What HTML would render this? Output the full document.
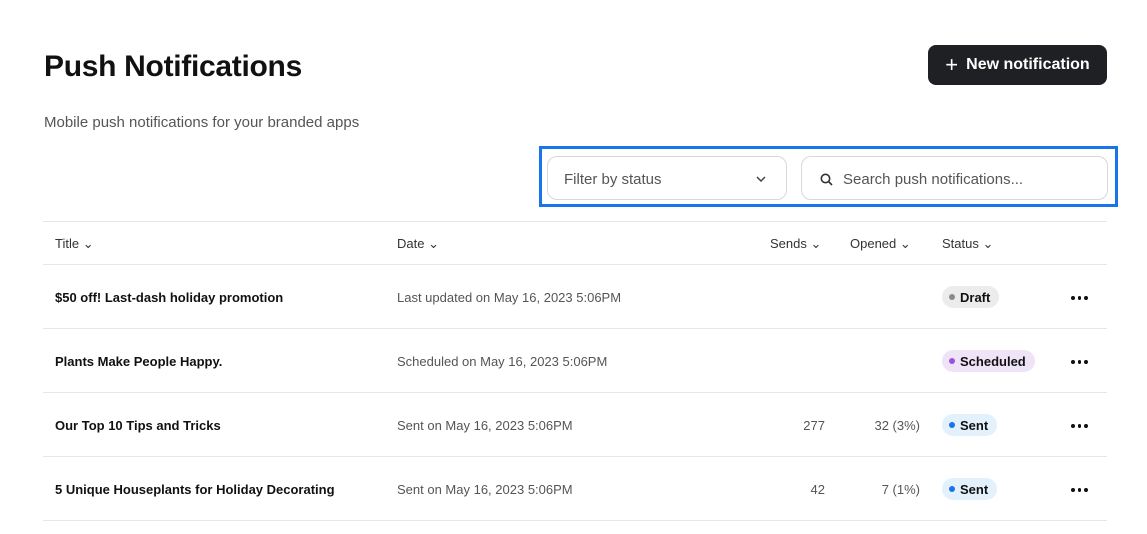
<!DOCTYPE html><html><head><style>
body{margin:0;width:1147px;height:534px;background:#fff;font-family:"Liberation Sans",sans-serif;position:relative;overflow:hidden;color:#111}
.a{position:absolute}
h1{position:absolute;left:44px;top:50px;margin:0;font-size:30px;font-weight:bold;letter-spacing:-0.3px}
.btn{left:928px;top:45px;width:179px;height:40px;background:#1f2023;border-radius:8px;color:#fff;font-size:16px;font-weight:bold;display:flex;align-items:center;justify-content:center;gap:8px}
.sub{left:44px;top:114px;font-size:15px;color:#555}
.hl{left:539px;top:146px;width:573px;height:55px;border:3px solid #1a73e8}
.inp{top:156px;height:40px;border:1px solid #d8d8d8;border-radius:10px;font-size:15px;color:#555;display:flex;align-items:center;padding-top:2px;box-sizing:content-box}
.line{left:43px;width:1064px;height:1px;background:#e6e6e6}
.th{top:236px;font-size:13px;color:#333}
.td{font-size:13px}
.b{font-weight:bold;color:#111}
.g{color:#555}
.badge{height:22px;border-radius:11px;font-size:13px;font-weight:bold;display:flex;align-items:center;padding:0 9px 0 7px;gap:5px}
.dot{width:6px;height:6px;border-radius:3px}
.more{left:1071px;display:flex;gap:3px}
.more i{width:3.5px;height:3.5px;border-radius:2px;background:#111;display:block}
</style></head><body>
<h1>Push Notifications</h1>
<div class="a btn"><span style="font-size:22px;font-weight:normal">+</span>New notification</div>
<div class="a sub">Mobile push notifications for your branded apps</div>
<div class="a hl"></div>
<div class="a inp" style="left:547px;width:238px"><span style="margin-left:16px">Filter by status</span><svg style="position:absolute;right:20px" width="10" height="6" viewBox="0 0 10 6"><path d="M1 1l4 4 4-4" stroke="#444" stroke-width="1.5" fill="none"/></svg></div>
<div class="a inp" style="left:801px;width:305px"><svg style="margin-left:18px" width="13" height="13" viewBox="0 0 13 13"><circle cx="5.5" cy="5.5" r="4.2" stroke="#333" stroke-width="1.6" fill="none"/><path d="M8.5 8.5l3.5 3.5" stroke="#333" stroke-width="1.6"/></svg><span style="margin-left:10px">Search push notifications...</span></div>
<div class="a line" style="top:221px"></div>
<div class="a th" style="left:55px">Title ⌄</div>
<div class="a th" style="left:397px">Date ⌄</div>
<div class="a th" style="left:770px">Sends ⌄</div>
<div class="a th" style="left:850px">Opened ⌄</div>
<div class="a th" style="left:942px">Status ⌄</div>
<div class="a line" style="top:264px"></div>
<div class="a line" style="top:328px"></div>
<div class="a line" style="top:392px"></div>
<div class="a line" style="top:456px"></div>
<div class="a line" style="top:520px"></div>

<div class="a td b" style="left:55px;top:290px">$50 off! Last-dash holiday promotion</div>
<div class="a td g" style="left:397px;top:290px">Last updated on May 16, 2023 5:06PM</div>
<div class="a badge" style="left:942px;top:286px;background:#ececec"><span class="dot" style="background:#8a8a8a"></span>Draft</div>
<div class="a more" style="top:296px"><i></i><i></i><i></i></div>

<div class="a td b" style="left:55px;top:354px">Plants Make People Happy.</div>
<div class="a td g" style="left:397px;top:354px">Scheduled on May 16, 2023 5:06PM</div>
<div class="a badge" style="left:942px;top:350px;background:#efe3f7"><span class="dot" style="background:#9b51e0"></span>Scheduled</div>
<div class="a more" style="top:360px"><i></i><i></i><i></i></div>

<div class="a td b" style="left:55px;top:418px">Our Top 10 Tips and Tricks</div>
<div class="a td g" style="left:397px;top:418px">Sent on May 16, 2023 5:06PM</div>
<div class="a td g" style="right:322px;top:418px">277</div>
<div class="a td g" style="right:227px;top:418px">32 (3%)</div>
<div class="a badge" style="left:942px;top:414px;background:#e3f1fd"><span class="dot" style="background:#1a73e8"></span>Sent</div>
<div class="a more" style="top:424px"><i></i><i></i><i></i></div>

<div class="a td b" style="left:55px;top:482px">5 Unique Houseplants for Holiday Decorating</div>
<div class="a td g" style="left:397px;top:482px">Sent on May 16, 2023 5:06PM</div>
<div class="a td g" style="right:322px;top:482px">42</div>
<div class="a td g" style="right:227px;top:482px">7 (1%)</div>
<div class="a badge" style="left:942px;top:478px;background:#e3f1fd"><span class="dot" style="background:#1a73e8"></span>Sent</div>
<div class="a more" style="top:488px"><i></i><i></i><i></i></div>
</body></html>
